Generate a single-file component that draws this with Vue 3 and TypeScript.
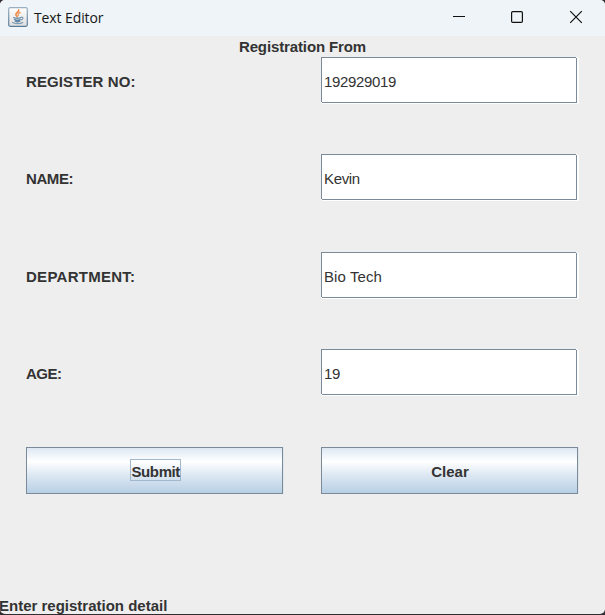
<script setup lang="ts">
import { ref } from 'vue'

interface Field {
  key: string
  label: string
  value: string
}

const initial: Field[] = [
  { key: 'register', label: 'REGISTER NO:', value: '192929019' },
  { key: 'name', label: 'NAME:', value: 'Kevin' },
  { key: 'department', label: 'DEPARTMENT:', value: 'Bio Tech' },
  { key: 'age', label: 'AGE:', value: '19' },
]

const fields = ref<Field[]>(initial)

function clearFields(): void {
  fields.value.forEach((field) => {
    field.value = ''
  })
}
</script>

<template>
  <div class="desktop">
    <form class="window" @submit.prevent>
      <header class="titlebar">
        <svg class="java-icon" width="20" height="20" viewBox="0 0 20 20">
          <defs>
            <linearGradient id="tile" x1="0" y1="0" x2="0" y2="1">
              <stop offset="0" stop-color="#ffffff" />
              <stop offset="1" stop-color="#dedede" />
            </linearGradient>
            <linearGradient id="edge" x1="0" y1="0" x2="0" y2="1">
              <stop offset="0" stop-color="#9aafbf" />
              <stop offset="1" stop-color="#587b98" />
            </linearGradient>
          </defs>
          <rect x="0.7" y="0.7" width="18.6" height="18.6" rx="1.5" fill="url(#tile)" stroke="url(#edge)" stroke-width="1.2" />
          <g fill="none" stroke-linecap="round">
            <path d="M10.6 3C11.500 5 7.600 5.700 7.900 7.500C8.100 8.500 9 8.800 9.200 9.600" stroke="#ed8b48" stroke-width="1.700" />
            <path d="M12.200 5.500C10.500 6.300 9.700 7 10.500 8.200" stroke="#ed9c66" stroke-width="1.400" />
            <path d="M5.700 10.600C7.500 11.300 11 11.200 12.700 10.600" stroke="#6f91ad" stroke-width="1.300" />
            <path d="M13.300 10.200C15.800 9.900 15.300 12.400 13 12.900" stroke="#6f91ad" stroke-width="1.100" />
            <path d="M6.700 12.600C8 13.300 10.600 13.300 12 12.600M7.300 14.200C8.600 14.800 10.600 14.700 11.700 14.200" stroke="#5f86a6" stroke-width="1.400" />
            <path d="M4.600 15.600C6.500 17 12.500 17 14.700 15.500" stroke="#7c9bb5" stroke-width="1.200" />
          </g>
        </svg>
        <span class="title">Text Editor</span>
        <svg class="controls" width="130" height="14" viewBox="0 0 130 14" fill="none" stroke="#101010">
          <path d="M0 6.500H12" />
          <rect x="58.600" y="1.600" width="10.800" height="10.800" rx="1.200" stroke-width="1.200" />
          <path d="M117.200 1.200L128.800 12.800M128.800 1.200L117.200 12.800" stroke-width="1.200" />
        </svg>
      </header>
      <h1 class="heading">Registration From</h1>
      <main class="grid">
        <template v-for="field in fields" :key="field.key">
          <label :for="field.key" :class="['label', field.key]">{{ field.label }}</label>
          <input :id="field.key" v-model="field.value" :class="['input', field.key]" type="text" autocomplete="off" spellcheck="false" />
        </template>
        <button class="button" type="submit"><span class="focus">Submit</span></button>
        <button class="button clear" type="button" @click="clearFields">Clear</button>
      </main>
      <footer class="status">Enter registration detail</footer>
    </form>
  </div>
</template>

<style>
body {
  margin: 0;
  overflow: hidden;
}
</style>

<style scoped>
.desktop {
  box-sizing: border-box;
  width: 605px;
  height: 615px;
  padding-bottom: 1px;
  background: #302d30;
}
.window {
  display: flex;
  flex-direction: column;
  height: 614px;
  overflow: hidden;
  border-radius: 5px;
  background: #eeeeee;
  color: #333333;
  font: bold 15px/17px "Liberation Sans", Arial, sans-serif;
}
.titlebar {
  display: flex;
  align-items: center;
  box-sizing: border-box;
  flex: none;
  height: 36px;
  padding: 0 22px 2px 8px;
  background: #eef4f7;
}
.title {
  padding-top: 1px;
  margin-left: 6px;
  color: #161616;
  font: 14px/20px "Open Sans", "Noto Sans", sans-serif;
  letter-spacing: -0.1px;
}
.controls {
  margin-left: auto;
}
.heading {
  flex: none;
  height: 21px;
  margin: 0;
  font: inherit;
  line-height: 22px;
  letter-spacing: -0.12px;
  text-align: center;
}
.grid {
  display: grid;
  grid-template-columns: 257px 257px;
  grid-template-rows: repeat(5, 47px);
  gap: 50.400px 38px;
  padding-left: 26px;
}
.label {
  padding-top: 1px;
  line-height: 47px;
}
.label.register {
  letter-spacing: 0.1px;
}
.label.name {
  letter-spacing: -0.4px;
}
.label.department {
  letter-spacing: 0.27px;
}
.label.age {
  letter-spacing: -0.5px;
}
/* Metal text border: the top-right and bottom-left corners stay open. */
.input {
  box-sizing: border-box;
  width: 256px;
  height: 46px;
  margin: 0;
  padding: 3px 3px 1px;
  border: 0;
  border-radius: 0;
  outline: none;
  box-shadow: 1px 1px #ffffff, 2px 1px #ffffff;
  background:
    linear-gradient(#7a8a99, #7a8a99) 0 0 / 255px 1px no-repeat,
    linear-gradient(#7a8a99, #7a8a99) 0 0 / 1px 45px no-repeat,
    linear-gradient(#7a8a99, #7a8a99) 100% 100% / 255px 1px no-repeat,
    linear-gradient(#7a8a99, #7a8a99) 100% 100% / 1px 45px no-repeat,
    #ffffff;
  color: #333333;
  font: 15px "Liberation Sans", Arial, sans-serif;
}
.input.register,
.input.name {
  letter-spacing: -0.34px;
}
.input.department {
  padding-top: 4px;
  letter-spacing: 0.1px;
}
.input.age {
  letter-spacing: -0.3px;
}
.button {
  box-sizing: border-box;
  display: flex;
  align-items: center;
  justify-content: center;
  height: 47px;
  margin: 0;
  padding: 2px 0 0;
  border: 1px solid #7a8a99;
  background: linear-gradient(#dde8f3 0%, #ffffff 30%, #dde8f3 60%, #b8cfe5 100%);
  box-shadow: 1px 0 #dfe7ee;
  color: inherit;
  font: inherit;
}
.button.clear {
  padding-left: 1px;
}
.focus {
  box-sizing: border-box;
  width: 51px;
  height: 22px;
  margin: -2px 0 0 1px;
  padding: 3px 0 0 1px;
  border: 1px solid #a3b8cc;
  letter-spacing: -0.4px;
  text-align: left;
  white-space: nowrap;
}
.status {
  margin: auto 0 0 -1px;
}
</style>
